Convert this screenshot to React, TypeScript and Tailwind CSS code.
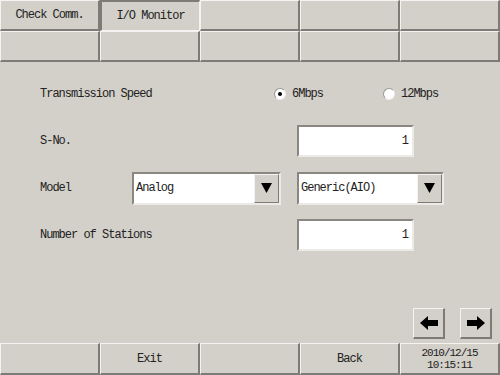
import React from 'react';

const font = "font-['Liberation_Mono','DejaVu_Sans_Mono',monospace] text-[12px] tracking-[-1px] text-[#222222]";

function Cell({ label, active, lines }: { label?: string; active?: boolean; lines?: string[] }) {
  return (
    <div
      className={`flex flex-col items-center justify-center leading-[12px] ${
        active
          ? 'border-t-2 border-l-2 border-t-[#7e7b77] border-l-[#7e7b77] border-b border-r border-b-[#f4f3f1] border-r-[#f4f3f1]'
          : 'border-t border-l border-t-[#f4f3f1] border-l-[#f4f3f1] border-b-2 border-r-2 border-b-[#7e7b77] border-r-[#7e7b77]'
      }`}
    >
      {label && <span>{label}</span>}
      {lines && lines.map((l) => <span key={l} className="text-[11px] leading-[12px]">{l}</span>)}
    </div>
  );
}

function Radio({ checked, label }: { checked?: boolean; label: string }) {
  return (
    <div className="flex items-center gap-[6px]">
      <span className="flex h-[12px] w-[12px] items-center justify-center rounded-full border border-t-[#9a9793] border-l-[#9a9793] border-b-[#eeeeee] border-r-[#eeeeee] bg-white">
        {checked && <span className="h-[4px] w-[4px] rounded-full bg-black" />}
      </span>
      <span>{label}</span>
    </div>
  );
}

function NumBox({ value }: { value: string }) {
  return (
    <div className="flex h-[32px] w-[117px] items-center justify-end border-t-2 border-l-2 border-t-[#8a8783] border-l-[#8a8783] border-b-2 border-r-2 border-b-[#eceae7] border-r-[#eceae7] bg-white pr-[4px]">
      {value}
    </div>
  );
}

function Select({ value, width }: { value: string; width: string }) {
  return (
    <div className={`flex h-[33px] ${width} border-t-2 border-l-2 border-t-[#8a8783] border-l-[#8a8783] border-b-2 border-r-2 border-b-[#eceae7] border-r-[#eceae7] bg-white`}>
      <div className="flex flex-1 items-center pl-[2px]">{value}</div>
      <div className="flex w-[25px] items-center justify-center border-t border-l border-t-[#f4f3f1] border-l-[#f4f3f1] border-b border-r border-b-[#7e7b77] border-r-[#7e7b77] bg-[#d3cfc9]">
        <svg width="11" height="10" viewBox="0 0 11 10">
          <polygon points="0,0 11,0 5.5,10" fill="#000" />
        </svg>
      </div>
    </div>
  );
}

function ArrowBtn({ dir }: { dir: 'left' | 'right' }) {
  return (
    <div className="flex h-[31px] w-[32px] items-center justify-center border-t border-l border-t-[#f4f3f1] border-l-[#f4f3f1] border-b-2 border-r-2 border-b-[#7e7b77] border-r-[#7e7b77]">
      <svg width="18" height="14" viewBox="0 0 18 14">
        {dir === 'left' ? (
          <polygon points="0,7 8,0 8,4 18,4 18,10 8,10 8,14" fill="#000" />
        ) : (
          <polygon points="18,7 10,0 10,4 0,4 0,10 10,10 10,14" fill="#000" />
        )}
      </svg>
    </div>
  );
}

export default function App() {
  return (
    <div className={`flex h-[375px] w-[500px] flex-col bg-[#d3cfc9] ${font}`}>
      {/* タブ */}
      <div className="grid grid-cols-5 grid-rows-[31px_31px]">
        <Cell label="Check Comm." />
        <Cell label="I/O Monitor" active />
        <Cell />
        <Cell />
        <Cell />
        <Cell />
        <Cell />
        <Cell />
        <Cell />
        <Cell />
      </div>

      {/* 設定 */}
      <div className="flex flex-col gap-[15px] pl-[40px] pt-[16px]">
        <div className="flex h-[32px] items-center">
          <span className="w-[234px]">Transmission Speed</span>
          <div className="flex gap-[60px]">
            <Radio checked label="6Mbps" />
            <Radio label="12Mbps" />
          </div>
        </div>
        <div className="flex h-[32px] items-center">
          <span className="w-[257px]">S-No.</span>
          <NumBox value="1" />
        </div>
        <div className="flex h-[32px] items-center">
          <span className="w-[92px]">Model</span>
          <Select value="Analog" width="w-[149px]" />
          <div className="w-[16px]" />
          <Select value="Generic(AIO)" width="w-[147px]" />
        </div>
        <div className="flex h-[32px] items-center">
          <span className="w-[257px]">Number of Stations</span>
          <NumBox value="1" />
        </div>
      </div>

      <div className="mt-auto flex justify-end gap-[15px] pb-[4px] pr-[8px]">
        <ArrowBtn dir="left" />
        <ArrowBtn dir="right" />
      </div>

      {/* フッター */}
      <div className="grid h-[32px] grid-cols-5">
        <Cell />
        <Cell label="Exit" />
        <Cell />
        <Cell label="Back" />
        <Cell lines={['2010/12/15', '10:15:11']} />
      </div>
    </div>
  );
}
